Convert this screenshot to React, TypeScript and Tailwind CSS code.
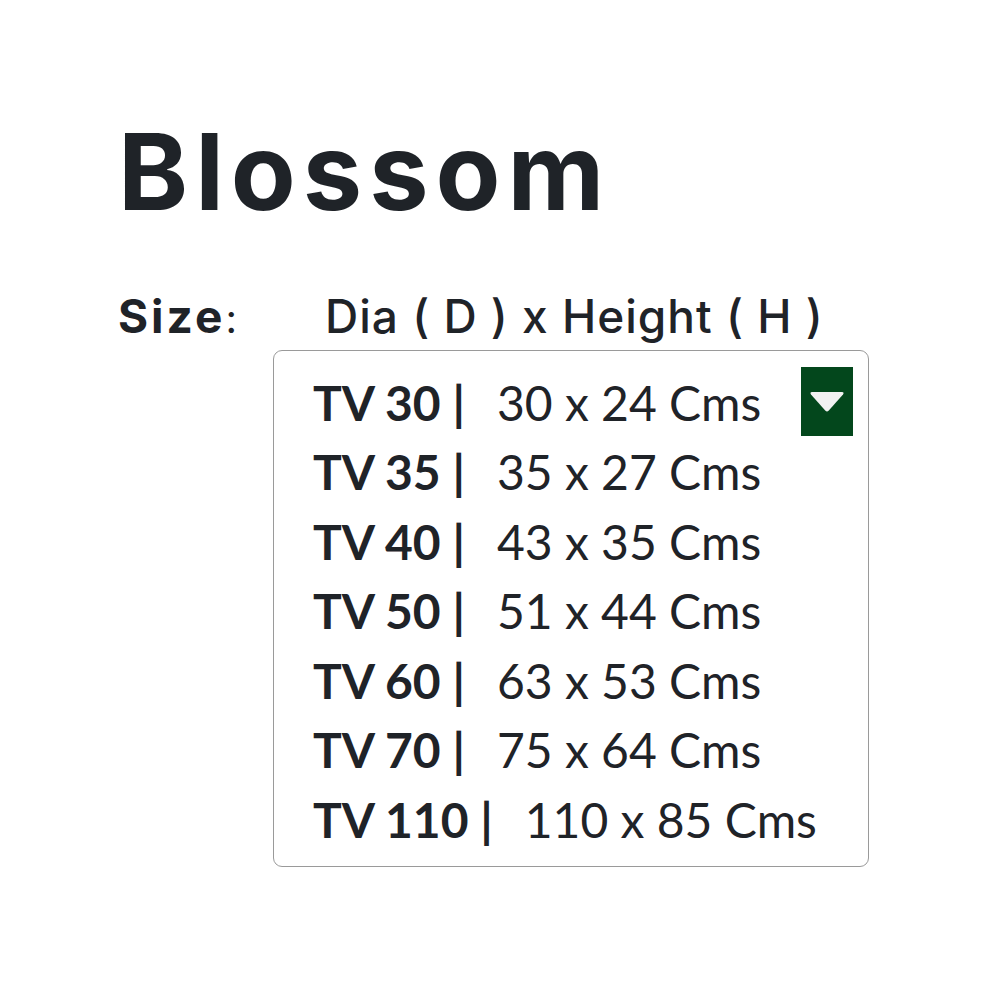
import React from "react";

const rows = [
  ["TV 30", "30 x 24 Cms"],
  ["TV 35", "35 x 27 Cms"],
  ["TV 40", "43 x 35 Cms"],
  ["TV 50", "51 x 44 Cms"],
  ["TV 60", "63 x 53 Cms"],
  ["TV 70", "75 x 64 Cms"],
  ["TV 110", "110 x 85 Cms"],
];

export default function App() {
  return (
    <div className="w-[1000px] h-[1000px] bg-white text-[#1f2328] pl-[118px] pt-[112px]">
      <h1 className="text-[106px] leading-[120px] font-bold tracking-[7px] [font-family:Inter,sans-serif]">
        Blossom
      </h1>
      <div className="flex items-baseline mt-[50px] h-[54px] [font-family:Inter,sans-serif]">
        <span className="text-[46px] font-bold tracking-[3px] w-[207px]">
          Size<span className="font-normal text-[40px]">:</span>
        </span>
        <span className="text-[46px] font-medium tracking-[1px]">Dia ( D ) x Height ( H )</span>
      </div>
      <div className="relative ml-[155px] mt-[14px] w-[596px] h-[517px] border border-[#9a9a9a] rounded-[9px] pl-[39px] pt-[17px] [font-family:Lato,sans-serif]">
        <div className="absolute right-[15px] top-[16px] w-[52px] h-[69px] bg-[#03471c] flex items-center justify-center">
          <svg width="36" height="24" viewBox="0 0 36 24">
            <path d="M3 2 L33 2 Q35.5 2 34 4.5 L19.8 20.5 Q18 22.5 16.2 20.5 L2 4.5 Q0.5 2 3 2 Z" fill="#f2f2f2" />
          </svg>
        </div>
        {rows.map(([l, v]) => (
          <div key={l} className="h-[69.5px] flex items-center text-[48px] leading-none">
            <span className="font-bold">{l} |</span>
            <span className="ml-[32px] font-normal">{v}</span>
          </div>
        ))}
      </div>
    </div>
  );
}
